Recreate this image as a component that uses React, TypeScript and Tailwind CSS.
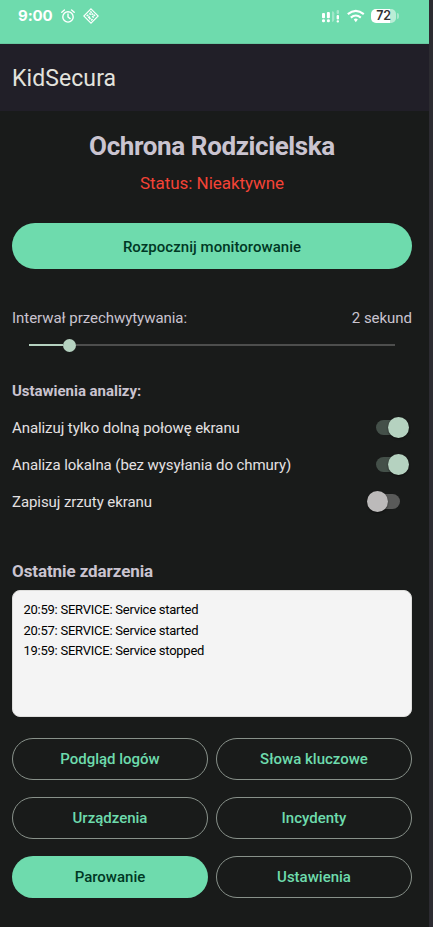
import React from "react";

function StatusBar() {
  return (
    <div className="flex h-[44px] shrink-0 border-b border-[#68c9a0] bg-[#6edbad] pl-[18px] text-white">
      <div className="flex h-[32px] w-[303px] items-center">
        <span className="w-[43px] font-['Inter',sans-serif] text-[15px] leading-[20px] font-bold tracking-[-0.1px]">9:00</span>
        <svg className="h-[14px] w-[14px]" viewBox="0 0 14 14" fill="none" stroke="currentColor" strokeWidth="1.4" strokeLinecap="round">
          <circle cx="7" cy="7.9" r="5.2" />
          <path d="M7 4.9V8l2.1 1.6M.8 3.2 3.4 1M13.2 3.2 10.6 1" />
        </svg>
        <svg className="ml-[8px] h-[16px] w-[16px]" viewBox="0 0 16 16" fill="none" stroke="currentColor" strokeWidth="1.1">
          <path d="M8 .8 15.2 8 8 15.2.8 8Z" />
          <path strokeWidth="1.5" d="M7.2 3.5l1.6 1.2M6.3 5.4l1.5 1.2M9.8 5.3l-1 1.6M3.6 7.9l1.8-.9M5 9.5l1.9-.9M10.4 6.8l1.8.8M9 8.4l2 1M6.3 11.3l1.2-1.6M8.2 12.4l1.3-1.5" />
        </svg>
      </div>
      <div className="flex h-[32px] items-center">
        <svg className="h-[14px] w-[18px]" viewBox="0 0 18 14" fill="currentColor">
          <rect x="1" y="4" width="3" height="5.3" rx="1" />
          <rect x="1" y="10.3" width="3" height="3" rx="1.2" />
          <rect x="5.9" y="3" width="3" height="6.3" rx="1" />
          <rect x="5.9" y="10.3" width="3" height="3" rx="1.2" />
          <path d="M11 2.2q2.3 0 2.3 2v6q0 2.5-2.3 2.9Z" opacity=".35" />
          <rect x="15.6" y="1" width="2.4" height="4" rx="1" opacity=".4" />
          <rect x="15.6" y="6" width="2.4" height="4.4" rx="1" />
          <rect x="15.6" y="11.2" width="2.4" height="2.2" rx="1" />
        </svg>
        <svg className="ml-[8px] h-[14px] w-[18px]" viewBox="0 0 18 14" fill="none" stroke="currentColor" strokeWidth="2.1">
          <path d="M.8 5.1Q8.8-1.4 16.8 5.1M3.8 8.6q5-4.2 10 0" />
          <path fill="currentColor" stroke="none" d="M8.8 9.6q1.2 0 2 .9l-2 2.7-2-2.7q.8-.9 2-.9Z" />
        </svg>
        <div className="ml-[6px] flex h-[14px] w-[25px] items-center justify-center rounded-[5px] bg-[linear-gradient(90deg,#fff_76%,#baedd6_76%)]">
          <span className="font-['Inter',sans-serif] text-[12.5px] leading-[14px] font-semibold tracking-[-0.3px] text-[#333]">72</span>
        </div>
        <div className="ml-px h-[6px] w-[2px] rounded-r-sm bg-[#a9e8cd]" />
      </div>
    </div>
  );
}

function Toggle({ on }: { on: boolean }) {
  return (
    <div className={on ? "flex h-[22px] w-[45px] items-center justify-end pr-[3.5px]" : "flex h-[22px] w-[45px] items-center"}>
      {on ? (
        <>
          <div className="-mr-[14px] h-[15px] w-[26px] rounded-full bg-[#445049]" />
          <div className="z-10 h-[21px] w-[21px] rounded-full bg-[#b5d2c0] shadow-[0_1px_2px_#0008]" />
        </>
      ) : (
        <>
          <div className="z-10 h-[21px] w-[21px] rounded-full bg-[#bcbaba] shadow-[0_1px_2px_#0008]" />
          <div className="-ml-[14px] h-[15px] w-[26px] rounded-full bg-[#595a59]" />
        </>
      )}
    </div>
  );
}

function SettingRow({ label, on }: { label: string; on: boolean }) {
  return (
    <div className="flex h-[37px] items-center justify-between text-[15px] tracking-[-0.08px] text-[#e4e1e2]">
      <span className="pt-[2px]">{label}</span>
      <Toggle on={on} />
    </div>
  );
}

function ActionButton({ label, filled = false }: { label: string; filled?: boolean }) {
  return (
    <button
      className={
        filled
          ? "h-[42px] rounded-full bg-[#6edbad] text-[#003824]"
          : "h-[42px] rounded-full border border-[#88918a] text-[#6edbad]"
      }
    >
      {label}
    </button>
  );
}

export default function App() {
  return (
    <div className="flex h-[927px] w-[433px] bg-[#2c2b31] font-['Roboto',sans-serif]">
      <div className="flex w-[429px] flex-col bg-[#191b1a]">
        <StatusBar />
        <header className="flex h-[67px] shrink-0 items-center bg-[#211f28] pt-[3px] pl-[12px] text-[23px] tracking-[0.08px] text-[#e3e3dd]">
          KidSecura
        </header>
        <main className="flex w-[412px] flex-col pl-[12px] text-[#cac4d0]">
          <h1 className="mt-[19px] text-center text-[26px] leading-[32px] font-bold tracking-[-0.38px]">Ochrona Rodzicielska</h1>
          <p className="mt-[11px] text-center text-[17px] leading-[20px] tracking-[-0.05px] text-[#f44336]">Status: Nieaktywne</p>
          <button className="mt-[30px] h-[46px] rounded-full bg-[#6edbad] pt-[2px] text-[15px] font-medium tracking-[0.03px] text-[#003824]">
            Rozpocznij monitorowanie
          </button>
          <div className="mt-[39px] flex justify-between text-[15px] leading-[20px] tracking-[-0.04px]">
            <span>Interwał przechwytywania:</span>
            <span>2 sekund</span>
          </div>
          <div className="mx-[17px] mt-[10px] flex h-[14px] items-center">
            <div className="h-[2px] w-[34px] bg-[#b5d2c0]" />
            <div className="h-[13px] w-[13px] rounded-full bg-[#b5d2c0]" />
            <div className="h-[2px] flex-1 bg-[#4d4e4d]" />
          </div>
          <h2 className="mt-[29px] text-[15px] leading-[20px] font-bold tracking-[-0.03px]">Ustawienia analizy:</h2>
          <div className="mt-[8px] flex flex-col">
            <SettingRow label="Analizuj tylko dolną połowę ekranu" on />
            <SettingRow label="Analiza lokalna (bez wysyłania do chmury)" on />
            <SettingRow label="Zapisuj zrzuty ekranu" on={false} />
          </div>
          <h2 className="mt-[41px] text-[17px] leading-[20px] font-bold tracking-[-0.09px]">Ostatnie zdarzenia</h2>
          <div className="mt-[9px] h-[127px] rounded-[8px] border border-[#dededc] bg-[#f4f4f4] pt-[9px] pl-[10.5px] text-[13px] leading-[20.5px] tracking-[-0.25px] text-black">
            <p>20:59: SERVICE: Service started</p>
            <p>20:57: SERVICE: Service started</p>
            <p>19:59: SERVICE: Service stopped</p>
          </div>
          <div className="mt-[21px] grid grid-cols-2 gap-x-[8px] gap-y-[17px] text-[15px] font-medium">
            <ActionButton label="Podgląd logów" />
            <ActionButton label="Słowa kluczowe" />
            <ActionButton label="Urządzenia" />
            <ActionButton label="Incydenty" />
            <ActionButton label="Parowanie" filled />
            <ActionButton label="Ustawienia" />
          </div>
        </main>
      </div>
    </div>
  );
}
